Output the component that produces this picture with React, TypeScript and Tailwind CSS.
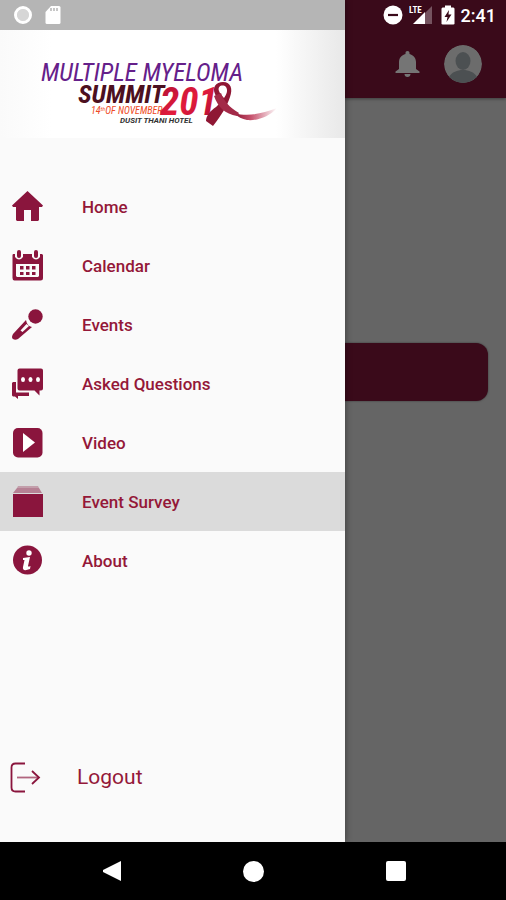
import type { ReactNode } from 'react';

type Item = { label: string; icon: ReactNode; active?: boolean };

const items: Item[] = [
  { label: 'Home', icon: <HomeIcon /> },
  { label: 'Calendar', icon: <CalendarIcon /> },
  { label: 'Events', icon: <MicIcon /> },
  { label: 'Asked Questions', icon: <ChatIcon /> },
  { label: 'Video', icon: <VideoIcon /> },
  { label: 'Event Survey', icon: <SurveyIcon />, active: true },
  { label: 'About', icon: <AboutIcon /> },
];

export default function App() {
  return (
    <div className="flex min-h-screen flex-col bg-black font-[Roboto,sans-serif]">
      <div className="relative flex flex-1 flex-col bg-[#656565]">
        <Page />
        <Drawer />
      </div>
      <SystemNav />
    </div>
  );
}

function Page() {
  return (
    <>
      <header className="bg-[#3a0a1a] shadow-[0_1px_3px_rgba(0,0,0,0.4)]">
        <StatusIcons />
        <div className="flex h-[68px] items-center justify-end gap-6 pr-6">
          <button type="button" aria-label="Notifications">
            <svg viewBox="0 0 26 28" className="h-7 w-[26px] fill-[#757575]">
              <path d="M13.500 1c1.300 0 2 .9 2 2v.9c4 1 6.500 4.100 6.500 8.100v7l3.500 2.500V23h-24v-1.500L5 19v-7c0-4 2.500-7.100 6.500-8.100V3c0-1.100.7-2 2-2zM10.500 24h6c0 1.800-1.300 3-3 3s-3-1.200-3-3z" />
            </svg>
          </button>
          <button type="button" aria-label="Profile" className="overflow-hidden rounded-full">
            <svg viewBox="0 0 38 38" className="size-[38px]">
              <circle cx="19" cy="19" r="19" fill="#6c6c6c" />
              <ellipse cx="19" cy="16" rx="7.500" ry="9" fill="#4c5052" />
              <path d="M5 32c3-5 8-7 14-7s11 2 14 7c-4 4-8 6-14 6s-10-2-14-6z" fill="#4c5052" />
            </svg>
          </button>
        </div>
      </header>
      <main className="px-[18px] pt-[245px]">
        <div className="h-[58px] rounded-xl bg-[#3a0a1a] shadow-[0_0_2px_rgba(0,0,0,0.5)]" />
      </main>
    </>
  );
}

function StatusIcons() {
  return (
    <div className="flex h-[30px] items-center justify-end pr-[10px] text-white">
      <svg viewBox="0 0 20 20" className="mr-[6px] size-5">
        <circle cx="10" cy="10" r="9.500" fill="#fff" />
        <path d="M5 10h10" stroke="#3a0a1a" strokeWidth="2.200" />
      </svg>
      <svg viewBox="0 0 24 20" className="mr-[8px] h-5 w-6">
        <path d="M23 1v18h-7V8z" fill="#fff" opacity=".3" />
        <path d="M4 19 16 7v12z" fill="#fff" />
        <text x="0" y="8" fontSize="9" fontWeight="700" fill="#fff" fontFamily="Roboto Condensed, Roboto">
          LTE
        </text>
      </svg>
      <svg viewBox="0 0 14 20" className="mr-[6px] h-5 w-[14px]">
        <path d="M4 .5h6v2h2.500l1 1V19l-1 .5h-11l-1-.5V3.500l1-1H4z" fill="#fff" />
        <path d="M8 5 3.500 12H6.500L5.500 17l5-7.500H7.500z" fill="#3a0a1a" />
      </svg>
      <time className="pt-px text-lg leading-5 font-medium">2:41</time>
    </div>
  );
}

function Drawer() {
  return (
    <aside className="absolute inset-y-0 left-0 flex w-[calc(100%-161px)] flex-col bg-[#fafafa] shadow-[1px_0_6px_rgba(0,0,0,0.35)]">
      <div className="flex h-[30px] items-center gap-3 bg-[#b5b5b5] pl-[13px]">
        <svg viewBox="0 0 20 20" className="size-5">
          <circle cx="10" cy="10" r="6" fill="#d6d6d6" />
          <circle cx="10" cy="10" r="7.500" fill="none" stroke="#fff" strokeWidth="3" />
        </svg>
        <svg viewBox="0 0 16 20" className="h-5 w-4">
          <path d="M6 1h8q1.500 0 1.500 1.500v15q0 1.500-1.500 1.500H2q-1.500 0-1.500-1.500V7z" fill="#fff" />
          <path d="M6 3v3M9 3v3M12 3v3" stroke="#b5b5b5" strokeWidth="1.500" />
        </svg>
      </div>
      <div className="h-[108px] bg-linear-to-r from-[#fafafa] via-white via-15% to-white">
        <div className="h-full bg-linear-to-r from-transparent from-80% to-[#e8e8e8]">
          <Logo />
        </div>
      </div>
      <nav className="pt-[39px]">
        <ul>
          {items.map((item) => (
            <li key={item.label}>
              <a
                href="#"
                aria-current={item.active ? 'page' : undefined}
                className={`flex h-[59px] items-center gap-[39px] pl-3 text-[17px] font-medium text-[#941838] ${
                  item.active ? 'bg-[#dbdbdb]' : ''
                }`}
              >
                {item.icon}
                <span className="pt-[2px]">{item.label}</span>
              </a>
            </li>
          ))}
        </ul>
      </nav>
      <button type="button" className="mt-auto mb-[44px] flex h-10 items-center gap-[35px] pl-[10px] text-[21px] text-[#941838]">
        <svg viewBox="0 0 32 32" className="size-8 fill-none stroke-[#8a153d]" strokeWidth="1.800">
          <path d="M15 1.500H5.500q-4 0-4 4v20q0 4 4 4H15" />
          <path d="M7 15.500h21" opacity=".65" />
          <path d="m22 9 7 6.500-7 6.500" />
        </svg>
        Logout
      </button>
    </aside>
  );
}

function Logo() {
  return (
    <svg
      viewBox="0 0 345 108"
      className="h-[108px] w-[345px] max-w-full"
      fontFamily="Liberation Sans Narrow, Roboto Condensed, Roboto, sans-serif"
      fontStyle="italic"
    >
      <defs>
        <linearGradient id="red" x1="0" y1="0" x2="1" y2="1">
          <stop offset="0" stopColor="#a90f35" />
          <stop offset=".5" stopColor="#e31b3c" />
          <stop offset="1" stopColor="#a80d32" />
        </linearGradient>
        <linearGradient id="tail" x1="0" x2="1">
          <stop offset="0" stopColor="#8c1230" />
          <stop offset=".4" stopColor="#c7536e" />
          <stop offset="1" stopColor="#c7536e" stopOpacity="0" />
        </linearGradient>
      </defs>
      <text x="41" y="51" fontSize="25" fill="#65208a">MULTIPLE MYELOMA</text>
      <text x="78" y="73" fontSize="26" fontWeight="700" fill="#4c1020">SUMMIT</text>
      <text x="91" y="84" fontSize="10" fill="#ee4a25">
        14<tspan fontSize="6" dy="-3">th</tspan>
        <tspan dy="3">OF NOVEMBER</tspan>
      </text>
      <text x="160" y="85" fontSize="39" fontWeight="700" fill="url(#red)">201</text>
      <text x="120" y="93" fontSize="8" fontWeight="700" fill="#333" fontFamily="Roboto, sans-serif">
        DUSIT THANI HOTEL
      </text>
      <path d="M234 83c14 4 26 1 43-5-8 9-20 13-30 12-5-1-9-3-13-7z" fill="url(#tail)" />
      <path
        fillRule="evenodd"
        d="M215 64c-3-7 1-12 8-12 8 0 10 7 7 15-3 9-9 19-17 29l-7-5c0-5 4-10 10-14l5-5c-3-3-5-5-6-8zm4-3c1 3 3 5 5 7 3-4 4-8 2-11-3-3-9-1-7 4z"
        fill="#8f1734"
      />
      <path d="m214 66 7-3c3 8 8 14 18 20l-2 3c-12-2-19-9-23-20z" fill="#a32a48" />
    </svg>
  );
}

function SystemNav() {
  return (
    <nav className="flex h-[58px] items-center justify-center gap-[122px] bg-black">
      <button type="button" aria-label="Back">
        <svg viewBox="0 0 20 22" className="h-[22px] w-5 fill-white">
          <path d="M20 1v20L2 12v-2z" />
        </svg>
      </button>
      <button type="button" aria-label="Home screen" className="size-[21px] rounded-full bg-white" />
      <button type="button" aria-label="Recent apps" className="size-5 rounded-xs bg-white" />
    </nav>
  );
}

function Icon({ children }: { children: ReactNode }) {
  return (
    <svg viewBox="0 0 31 31" className="size-[31px] shrink-0 fill-[#8a153d]" aria-hidden="true">
      {children}
    </svg>
  );
}

function HomeIcon() {
  return (
    <Icon>
      <path d="M15.500 0 31 14.500 30 16h-3v13l-1 1h-7V19h-7v11H5l-1-1V16H1l-1-1.500z" />
    </Icon>
  );
}

function CalendarIcon() {
  return (
    <Icon>
      <path fillRule="evenodd" d="M1 4h2v3q4 5 8 0V4h9v3q4 5 8 0V4h2l1 1v23q0 2.500-2.500 2.500h-26Q.5 30.500.5 28V5zM4 14v12l1 1h21l1-1V14z" />
      <rect x="5" y="0" width="4" height="8" rx="2" />
      <rect x="22" y="0" width="4" height="8" rx="2" />
      <path d="M8 16h3.500v3.500H8zM14 16h3.500v3.500H14zM20 16h3.500v3.500H20zM8 22h3.500v3H8zM14 22h3.500v3H14zM20 22h3.500v3H20z" />
    </Icon>
  );
}

function MicIcon() {
  return (
    <Icon>
      <circle cx="23.500" cy="7.500" r="7.200" />
      <path fillRule="evenodd" d="M14 11q1 6 6 7L6 30q-3 1.500-5 0t0-5zM14.500 15l-6 6.500 2 1.500 6.500-6z" />
    </Icon>
  );
}

function ChatIcon() {
  return (
    <Icon>
      <path d="M7.500.5h21.500q2 0 2 2v18q0 2-2 2h-1.500v5l-5-5h-15q-2 0-2-2v-18q0-2 2-2z" />
      <path d="M1 14h3v10.500h13V28H6v3l-3-2.500H1l-1-1V15z" />
      <g fill="#fff">
        <ellipse cx="11" cy="11.500" rx="2" ry="2.500" />
        <ellipse cx="18.500" cy="11.500" rx="2" ry="2.500" />
        <ellipse cx="26" cy="11.500" rx="2" ry="2.500" />
      </g>
    </Icon>
  );
}

function VideoIcon() {
  return (
    <Icon>
      <rect x="1" y="1" width="29.500" height="29.500" rx="5" />
      <path d="M11 6v19l12-9.500z" fill="#fff" />
    </Icon>
  );
}

function SurveyIcon() {
  return (
    <Icon>
      <path d="M6 0h20l1 2H5z" opacity=".3" />
      <path d="M5 2h22l3 5H1z" opacity=".45" />
      <path d="M1 8h30v23H1z" />
    </Icon>
  );
}

function AboutIcon() {
  return (
    <Icon>
      <circle cx="15.500" cy="15" r="14.500" />
      <circle cx="17" cy="8" r="2.700" fill="#fff" />
      <path d="m11 13 7-1-2 9q0 1 2.500 0l-.5 3q-8 3-7-2l1.500-7H11z" fill="#fff" />
    </Icon>
  );
}
